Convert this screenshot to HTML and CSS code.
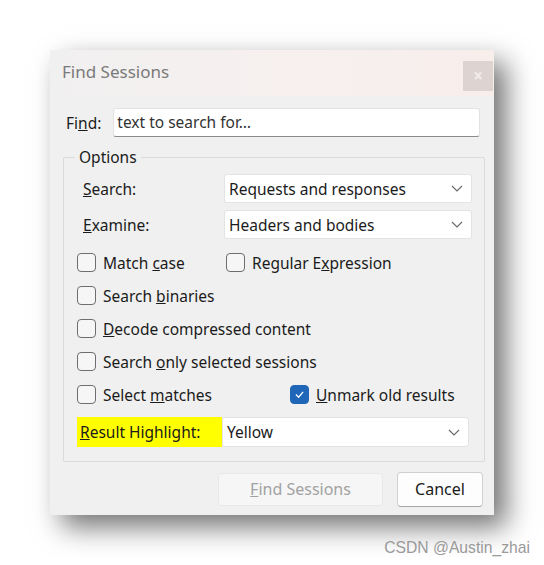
FILE: index.html
```html
<!DOCTYPE html>
<html>
<head>
<meta charset="utf-8">
<link rel="stylesheet" href="styles.css">
</head>
<body>
<div class="dialog">
  <div class="titlebar">
    <span class="title">Find Sessions</span>
    <span class="close">×</span>
  </div>
  <div class="find-row">
    <span class="find-label">Fi<u>n</u>d:</span>
    <div class="input">text to search for…</div>
  </div>
  <div class="group">
    <span class="legend">Options</span>
    <div class="field-row">
      <span class="field-label"><u>S</u>earch:</span>
      <div class="select"><span>Requests and responses</span><svg class="chev" viewBox="0 0 12 7"><polyline points="1,1 6,6 11,1"/></svg></div>
    </div>
    <div class="field-row second">
      <span class="field-label"><u>E</u>xamine:</span>
      <div class="select"><span>Headers and bodies</span><svg class="chev" viewBox="0 0 12 7"><polyline points="1,1 6,6 11,1"/></svg></div>
    </div>
    <div class="checks">
      <div class="check-row">
        <label class="check w-match"><span class="box"></span><span>Match <u>c</u>ase</span></label>
        <label class="check"><span class="box"></span><span>Regular E<u>x</u>pression</span></label>
      </div>
      <div class="check-row">
        <label class="check"><span class="box"></span><span>Search <u>b</u>inaries</span></label>
      </div>
      <div class="check-row">
        <label class="check"><span class="box"></span><span><u>D</u>ecode compressed content</span></label>
      </div>
      <div class="check-row">
        <label class="check"><span class="box"></span><span>Search <u>o</u>nly selected sessions</span></label>
      </div>
      <div class="check-row">
        <label class="check w-select"><span class="box"></span><span>Select <u>m</u>atches</span></label>
        <label class="check"><span class="box checked"><svg viewBox="0 0 12 10"><polyline points="2,5 5,8 10,2"/></svg></span><span><u>U</u>nmark old results</span></label>
      </div>
    </div>
    <div class="highlight-row">
      <span class="hl-label"><u>R</u>esult Highlight:</span>
      <div class="select hl-select"><span>Yellow</span><svg class="chev" viewBox="0 0 12 7"><polyline points="1,1 6,6 11,1"/></svg></div>
    </div>
  </div>
  <div class="buttons">
    <div class="btn disabled"><u>F</u>ind Sessions</div>
    <div class="btn cancel">Cancel</div>
  </div>
</div>
<div class="watermark">CSDN @Austin_zhai</div>
</body>
</html>
```

FILE: styles.css
```css
html, body {
  margin: 0;
  padding: 0;
  background: #ffffff;
}
body {
  padding: 50px 0 0 50px;
  font-family: "Noto Sans", "Open Sans", sans-serif;
  font-size: 15.5px;
  color: #1b1b1b;
}
.dialog {
  width: 444px;
  height: 465px;
  background: #f0f0f0;
  box-shadow: 12px 12px 26px rgba(0, 0, 0, 0.55);
  display: flex;
  flex-direction: column;
  box-sizing: border-box;
}
.titlebar {
  height: 46px;
  display: flex;
  justify-content: space-between;
  align-items: flex-start;
  background: linear-gradient(90deg, #f1f0f0 0%, #f6f0ef 50%, #f8eeec 100%);
}
.title {
  margin: 11px 0 0 12px;
  font-size: 17px;
  line-height: 22px;
  color: #7a7a7a;
}
.close {
  margin: 11px 1px 0 0;
  width: 30px;
  height: 30px;
  background: #ddd4d2;
  color: #f1eceb;
  font-size: 17px;
  line-height: 30px;
  text-align: center;
  font-weight: bold;
}
.find-row {
  display: flex;
  align-items: center;
  margin: 12px 14px 0 16px;
  gap: 12px;
}
.input {
  flex: 1;
  height: 29px;
  box-sizing: border-box;
  background: #fff;
  border: 1px solid #e2e2e2;
  border-bottom: 1px solid #8a8a8a;
  border-radius: 3px;
  padding-left: 3px;
  line-height: 26px;
  color: #333;
}
.group {
  position: relative;
  margin: 20px 9px 0 13px;
  border: 1px solid #dadada;
  border-radius: 2px;
  padding: 16px 12px 14px 0;
}
.legend {
  position: absolute;
  top: -12px;
  left: 11px;
  padding: 0 4px;
  background: #f0f0f0;
  line-height: 22px;
}
.field-row {
  display: flex;
  align-items: center;
  padding-left: 19px;
}
.field-row.second {
  margin-top: 7px;
}
.field-label {
  width: 141px;
}
.select {
  flex: 1;
  height: 29px;
  box-sizing: border-box;
  background: #fff;
  border: 1px solid #e3e3e3;
  border-radius: 3px;
  display: flex;
  align-items: center;
  justify-content: space-between;
  padding: 0 6px 0 4px;
}
.chev {
  width: 12px;
  height: 7px;
  margin-right: 2px;
}
.chev polyline {
  fill: none;
  stroke: #6a6a6a;
  stroke-width: 1.2;
}
.checks {
  margin-top: 7px;
  display: flex;
  flex-direction: column;
}
.check-row {
  height: 33px;
  display: flex;
  align-items: center;
  padding-left: 13px;
}
.check {
  display: flex;
  align-items: center;
  gap: 7px;
}
.w-match {
  width: 149px;
}
.w-select {
  width: 213px;
}
.box {
  width: 19px;
  height: 19px;
  box-sizing: border-box;
  border: 1px solid #6e6e6e;
  border-radius: 4px;
  background: #f6f6f6;
  display: flex;
  align-items: center;
  justify-content: center;
}
.box.checked {
  background: #1f66b8;
  border-color: #1f66b8;
}
.box svg {
  width: 11px;
  height: 9px;
}
.box svg polyline {
  fill: none;
  stroke: #fff;
  stroke-width: 1.4;
}
.highlight-row {
  display: flex;
  margin: 6px 3px 0 13px;
  height: 30px;
}
.hl-label {
  width: 145px;
  box-sizing: border-box;
  background: #ffff00;
  padding-left: 3px;
  line-height: 30px;
}
.hl-select {
  height: 30px;
  padding-left: 4px;
}
.buttons {
  display: flex;
  justify-content: flex-end;
  align-items: center;
  gap: 14px;
  margin: 10px 11px 0 0;
}
.btn {
  box-sizing: border-box;
  border-radius: 4px;
  text-align: center;
  font-size: 16px;
}
.btn.disabled {
  width: 165px;
  height: 33px;
  line-height: 31px;
  background: #f6f6f6;
  border: 1px solid #e8e8e8;
  color: #a2a2a2;
}
.btn.cancel {
  width: 86px;
  height: 35px;
  line-height: 32px;
  background: #fdfdfd;
  border: 1px solid #d0d0d0;
  border-bottom-color: #a8a8a8;
  color: #1b1b1b;
}
.watermark {
  margin-top: 24px;
  width: 480px;
  text-align: right;
  font-family: "Liberation Sans", Arial, sans-serif;
  font-size: 15.7px;
  color: #9a9a9a;
}
```
